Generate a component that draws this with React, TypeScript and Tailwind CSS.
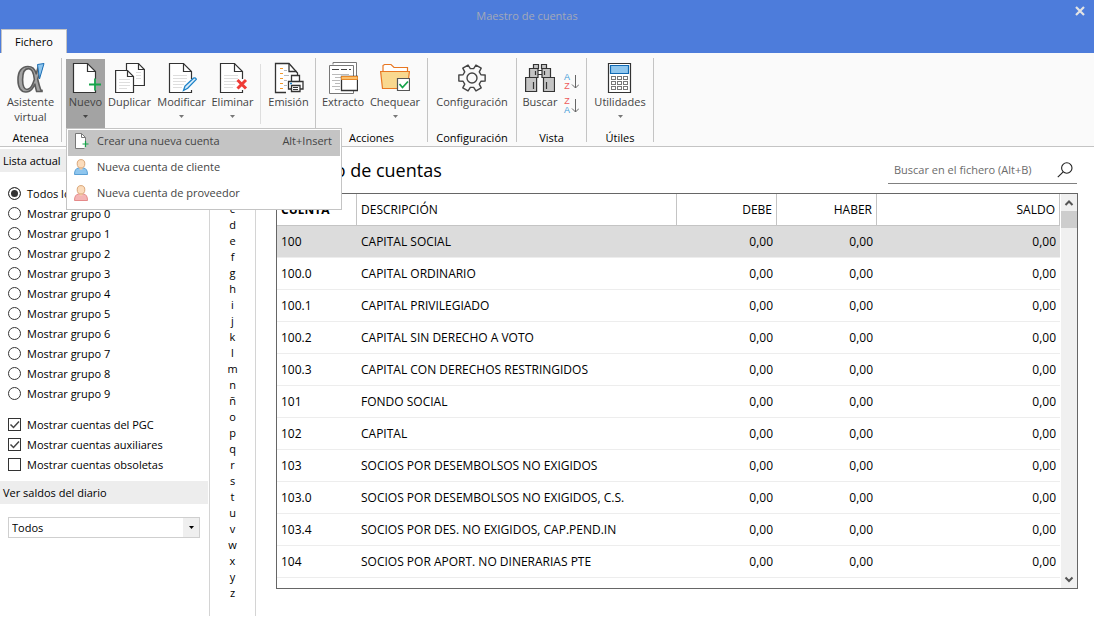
import { useState, type ReactNode } from "react";
import clsx from "clsx";

const accounts = [
  { code: "100", name: "CAPITAL SOCIAL" },
  { code: "100.0", name: "CAPITAL ORDINARIO" },
  { code: "100.1", name: "CAPITAL PRIVILEGIADO" },
  { code: "100.2", name: "CAPITAL SIN DERECHO A VOTO" },
  { code: "100.3", name: "CAPITAL CON DERECHOS RESTRINGIDOS" },
  { code: "101", name: "FONDO SOCIAL" },
  { code: "102", name: "CAPITAL" },
  { code: "103", name: "SOCIOS POR DESEMBOLSOS NO EXIGIDOS" },
  { code: "103.0", name: "SOCIOS POR DESEMBOLSOS NO EXIGIDOS, C.S." },
  { code: "103.4", name: "SOCIOS POR DES. NO EXIGIDOS, CAP.PEND.IN" },
  { code: "104", name: "SOCIOS POR APORT. NO DINERARIAS PTE" },
];

const groups = ["Todos los grupos", ...Array.from({ length: 10 }, (_, i) => `Mostrar grupo ${i}`)];
const letters = "abcdefghijklmnñopqrstuvwxyz".split("");

export default function App() {
  const [group, setGroup] = useState(groups[0]);
  const [letter, setLetter] = useState("");
  const [selected, setSelected] = useState("100");
  const [menuOpen, setMenuOpen] = useState(true);

  return (
    <div className="flex min-h-screen flex-col bg-white font-['Open_Sans',sans-serif] text-[11px] leading-4 text-black">
      <header className="flex h-[53px] flex-col justify-between bg-[#4d7cdb]">
        <div className="grid grid-cols-[1fr_auto_1fr] items-start">
          <h1 className="col-start-2 pt-2 pr-10 leading-4 text-[#a3a9b8]">Maestro de cuentas</h1>
          <button type="button" aria-label="Cerrar" className="mt-px mr-1 justify-self-end p-1">
            <svg className="size-3" viewBox="0 0 12 12" stroke="#e4e4e4" strokeWidth="2.2">
              <path d="M2 2l8 8M10 2l-8 8" />
            </svg>
          </button>
        </div>
        <nav className="flex px-px">
          <button type="button" className="h-6 w-[66px] border border-b-0 border-[#c4c4c4] bg-[#fafafa]">Fichero</button>
        </nav>
      </header>

      <div className="flex h-[94px] border-b border-[#c4c4c4] bg-[#fafafa] pt-[5px]">
        <RibbonGroup label="Atenea" width="w-[62px]">
          <RibbonButton label="Asistente virtual" width="w-[61px]" icon={<AlphaIcon />} />
        </RibbonGroup>
        <RibbonGroup label="" width="w-[254px]">
          <div className="relative ml-1">
            <RibbonButton label="Nuevo" width="w-[39px]" icon={<DocIcon kind="new" />} arrow active={menuOpen} onClick={() => setMenuOpen(!menuOpen)} />
            {menuOpen && (
              <div role="menu" className="absolute top-[70px] left-0 z-10 w-[276px] border border-[#c4c4c4] bg-white p-px text-[#444]">
                <MenuItem label="Crear una nueva cuenta" hint="Alt+Insert" active icon={<SmallDocIcon />} />
                <MenuItem label="Nueva cuenta de cliente" icon={<PersonIcon fill="#8fc6ee" stroke="#5a9fd4" />} />
                <MenuItem label="Nueva cuenta de proveedor" icon={<PersonIcon fill="#f4b4b4" stroke="#e58a8a" />} />
              </div>
            )}
          </div>
          <RibbonButton label="Duplicar" width="w-[49px]" icon={<DuplicateIcon />} />
          <RibbonButton label="Modificar" width="w-[55px]" icon={<DocIcon kind="edit" />} arrow />
          <RibbonButton label="Eliminar" width="w-[47px]" icon={<DocIcon kind="delete" />} arrow />
          <div className="mx-1 mt-1.5 h-[60px] w-px shrink-0 bg-[#dedede]" />
          <RibbonButton label="Emisión" width="w-[47px]" icon={<PrintIcon />} />
        </RibbonGroup>
        <RibbonGroup label="Acciones" width="w-[112px]">
          <RibbonButton label="Extracto" width="w-[54px]" icon={<StatementIcon />} />
          <RibbonButton label="Chequear" width="w-[50px]" icon={<FolderIcon />} arrow />
        </RibbonGroup>
        <RibbonGroup label="Configuración" width="w-[89px]">
          <RibbonButton label="Configuración" width="w-[88px]" icon={<GearIcon />} />
        </RibbonGroup>
        <RibbonGroup label="Vista" width="w-[70px]">
          <RibbonButton label="Buscar" width="w-[46px]" icon={<BinocularsIcon />} />
          <div className="flex flex-col gap-1.5 pt-[15px]">
            <SortButton label="Orden ascendente" first="A" second="Z" />
            <SortButton label="Orden descendente" first="Z" second="A" />
          </div>
        </RibbonGroup>
        <RibbonGroup label="Útiles" width="w-[67px]">
          <RibbonButton label="Utilidades" width="w-[66px]" icon={<CalculatorIcon />} arrow />
        </RibbonGroup>
      </div>

      <div className="flex flex-1 pb-px">
        <aside className="w-[210px] shrink-0 border-r border-[#d4d4d4] pt-0.5">
          <h2 className="mr-px h-[23px] bg-[#ededed] px-[3px] leading-[23px]">Lista actual</h2>
          <fieldset className="mt-3 flex flex-col px-2">
            {groups.map((item) => (
              <label key={item} className="flex h-5 items-center gap-1.5">
                <input
                  type="radio"
                  name="group"
                  checked={group === item}
                  onChange={() => setGroup(item)}
                  className="mb-px size-[13px] appearance-none rounded-full border border-[#333] bg-white checked:bg-[#333] checked:shadow-[inset_0_0_0_2px_white]"
                />
                {item}
              </label>
            ))}
          </fieldset>
          <div className="mt-[11px] flex flex-col px-2">
            <CheckRow label="Mostrar cuentas del PGC" checked />
            <CheckRow label="Mostrar cuentas auxiliares" checked />
            <CheckRow label="Mostrar cuentas obsoletas" />
          </div>
          <h2 className="mt-1.5 mr-px h-[23px] bg-[#ededed] px-[3px] leading-[23px]">
            <label htmlFor="balances">Ver saldos del diario</label>
          </h2>
          <div className="relative mx-2 mt-[13px] w-48">
            <select id="balances" className="h-[21px] w-full appearance-none border border-[#cfcfcf] bg-white px-[3px] leading-4">
              <option>Todos</option>
            </select>
            <div className="pointer-events-none absolute inset-y-px right-px flex w-4 items-center justify-center bg-[#efefef]">
              <Caret className="text-black" />
            </div>
          </div>
        </aside>

        <nav aria-label="Índice" className="flex w-[46px] shrink-0 flex-col items-center border-r border-[#d4d4d4] pt-[22px]">
          {letters.map((item) => (
            <button key={item} type="button" onClick={() => setLetter(item)} className={clsx("h-4 w-5", letter === item && "font-bold")}>
              {item}
            </button>
          ))}
        </nav>

        <main className="min-w-0 flex-1 pr-4 pl-5">
          <div className="flex h-[46px] items-start justify-between">
            <h2 className="pt-[9px] text-lg leading-7">Maestro de cuentas</h2>
            <label className="mt-[9px] mr-px flex h-7 w-[189px] items-center border-b border-[#808080] pr-1 pl-1.5">
              <input type="search" aria-label="Buscar en el fichero" placeholder="Buscar en el fichero (Alt+B)" className="min-w-0 flex-1 outline-none placeholder:text-[#6b6b6b]" />
              <svg className="size-4" viewBox="0 0 16 16" fill="none" stroke="#222" strokeWidth="1.1">
                <circle cx="9.8" cy="6" r="5.2" />
                <path d="M6.2 9.8L.8 15.2" />
              </svg>
            </label>
          </div>

          <div className="flex border border-[#666]">
            <div className="min-w-0 flex-1 pb-2.5">
              <table className="w-full table-fixed border-separate border-spacing-0 text-xs">
                <thead>
                  <tr className="h-8 *:border-r *:border-b *:border-[#c4c4c4]">
                    <th className="w-20 px-1 text-left font-bold">CUENTA</th>
                    <th className="w-80 px-1 text-left font-normal">DESCRIPCIÓN</th>
                    <th className="w-[100px] px-1 text-right font-normal">DEBE</th>
                    <th className="w-[100px] px-1 text-right font-normal">HABER</th>
                    <th className="px-1 text-right font-normal">SALDO</th>
                  </tr>
                </thead>
                <tbody>
                  {accounts.map((account) => (
                    <tr key={account.code} onClick={() => setSelected(account.code)} className={clsx("h-8 *:border-b *:border-[#ededed]", selected === account.code && "bg-[#dcdcdc]")}>
                      <td className="px-1">{account.code}</td>
                      <td className="truncate px-1">{account.name}</td>
                      <td className="px-1 text-right">0,00</td>
                      <td className="px-1 text-right">0,00</td>
                      <td className="px-1 text-right">0,00</td>
                    </tr>
                  ))}
                </tbody>
              </table>
            </div>
            <div className="ml-px flex w-4 flex-col items-center bg-[#f0f0f0]">
              <svg className="h-[17px] w-4" viewBox="0 0 16 17" fill="none" stroke="#555" strokeWidth="2">
                <path d="M4.5 11L8 7.5l3.5 3.5" />
              </svg>
              <div className="h-[17px] w-full bg-[#cdcdcd]" />
              <svg className="mt-auto h-[17px] w-4" viewBox="0 0 16 17" fill="none" stroke="#555" strokeWidth="2">
                <path d="M4.5 6.5L8 10l3.5-3.5" />
              </svg>
            </div>
          </div>
        </main>
      </div>
    </div>
  );
}

function RibbonGroup({ label, width, children }: { label: string; width: string; children: ReactNode }) {
  return (
    <section className={clsx("flex h-[84px] shrink-0 flex-col border-r border-[#c4c4c4]", width)}>
      <div className="flex h-[74px] shrink-0 items-start">{children}</div>
      <p className="text-center leading-3">{label}</p>
    </section>
  );
}

function RibbonButton({ label, width, icon, arrow, active, onClick }: { label: string; width: string; icon: ReactNode; arrow?: boolean; active?: boolean; onClick?: () => void }) {
  return (
    <button type="button" onClick={onClick} className={clsx("mt-px flex h-[69px] shrink-0 flex-col items-center pt-[3px] text-[#444]", width, active && "bg-[#a3a3a3]")}>
      {icon}
      <span className="leading-[15px]">{label}</span>
      {arrow && <Caret className={clsx("mt-1.5", active ? "text-[#444]" : "text-[#777]")} />}
    </button>
  );
}

function SortButton({ label, first, second }: { label: string; first: string; second: string }) {
  return (
    <button type="button" aria-label={label} className="flex h-[18px] w-4 items-center">
      <span className="flex w-2 flex-col items-center font-['Liberation_Sans',sans-serif] text-[9px] leading-[9px]">
        <span className={first === "A" ? "text-[#3f9bd8]" : "text-[#ee5a5a]"}>{first}</span>
        <span className={second === "A" ? "text-[#3f9bd8]" : "text-[#ee5a5a]"}>{second}</span>
      </span>
      <svg className="h-4 w-2 shrink-0" viewBox="0 0 8 16" fill="none" stroke="#666">
        <path d="M4.5 1v13M1 10.5L4.5 14L8 10.5" />
      </svg>
    </button>
  );
}

function MenuItem({ label, hint, icon, active }: { label: string; hint?: string; icon: ReactNode; active?: boolean }) {
  return (
    <button type="button" role="menuitem" className={clsx("flex h-[26px] w-full items-center pr-2 pb-1 pl-[5px]", active && "bg-[#c4c4c4]")}>
      {icon}
      <span className="ml-2">{label}</span>
      <span className="ml-auto">{hint}</span>
    </button>
  );
}

function CheckRow({ label, checked }: { label: string; checked?: boolean }) {
  return (
    <label className="flex h-5 items-center gap-1.5">
      <span className="mb-px grid size-[13px]">
        <input type="checkbox" defaultChecked={checked} className="peer col-start-1 row-start-1 size-[13px] appearance-none border border-[#333] bg-white" />
        <svg className="pointer-events-none invisible col-start-1 row-start-1 peer-checked:visible" viewBox="0 0 13 13" fill="none" stroke="#444" strokeWidth="1.5">
          <path d="M2.5 6.5l3 3l5.5-6" />
        </svg>
      </span>
      {label}
    </label>
  );
}

function Caret({ className }: { className?: string }) {
  return (
    <svg className={clsx("h-[3px] w-[5px] shrink-0", className)} viewBox="0 0 5 3" fill="currentColor">
      <path d="M0 0h5L2.5 3z" />
    </svg>
  );
}

function AlphaIcon() {
  return (
    <svg className="h-8 w-[30px] overflow-visible" viewBox="0 0 30 32">
      <text x="0" y="29" fontFamily="Liberation Serif" fontSize="52" fill="#a3a3a3" stroke="#5c5c5c" strokeWidth="1.6">α</text>
      <path d="M21.5 2.5L28 1.5L23.5 17z" fill="#8fc6ee" stroke="#1b6fb5" />
    </svg>
  );
}

function DocIcon({ kind }: { kind: "new" | "edit" | "delete" }) {
  return (
    <svg className="h-8 w-[30px]" viewBox="0 0 30 32" fill="none">
      <path d="M24.5 17V9.5L16.5 1.5H2.5V30.5H24.5V28" fill="#fff" stroke="#333" strokeWidth="1.2" />
      <path d="M16.5 1.5V9.5H24.5" stroke="#333" strokeWidth="1.2" />
      {kind !== "new" && <path d="M6 13.5h14M6 16.5h14M6 19.5h13M6 22.5h11M6 25.5h9" stroke="#dedede" />}
      {kind === "new" && <path d="M24 16.5v12M18 22.5h12" stroke="#16a34a" strokeWidth="1.8" />}
      {kind === "edit" && <path d="M16.5 28.5l1.5-4.5L26.5 16.2q2.5-.8 2.8 1.2l-8.6 8.8z" fill="#d6ebfa" stroke="#1d82c8" strokeWidth="1.3" />}
      {kind === "delete" && <path d="M19.5 18l8.5 8.5M28 18l-8.5 8.5" stroke="#ef3b36" strokeWidth="3" />}
    </svg>
  );
}

function DuplicateIcon() {
  return (
    <svg className="h-8 w-[30px]" viewBox="0 0 30 32" fill="none" stroke="#333" strokeWidth="1.2">
      <path d="M11.5 8V1.5H23.5L29.4 7.5V23.5H19" fill="#fff" />
      <path d="M23.5 1.5V7.5H29.5" />
      <path d="M.6 8.5H12.5L18.5 14.5V30.5H.6z" fill="#fff" />
      <path d="M12.5 8.5V14.5H18.5" />
      <path d="M4 17.5h11M4 20.5h11M4 23.5h11M4 26.5h8M21 10.5h5M21 13.5h5M21 16.5h5" stroke="#dedede" />
    </svg>
  );
}

function PrintIcon() {
  return (
    <svg className="h-8 w-[30px]" viewBox="0 0 30 32" fill="none" stroke="#333" strokeWidth="1.3">
      <path d="M12 30.5H1.5V1.5H15L23.5 11V13" fill="#fff" />
      <path d="M15 1.5V9.5H22.5" />
      <path d="M6 6.5h3M6 11.5h3M6 16.5h3M6 21.5h3M6 26.5h3" stroke="#f29a2e" strokeWidth="1.2" />
      <path d="M10 8.5h3M10 13.5h5M10 18.5h3M10 23.5h3" stroke="#bbb" strokeWidth="1" />
      <path d="M17.5 19V13.5h8V19" fill="#fff" />
      <path d="M14.5 19.5h14.5v7.5H14.5z" fill="#fff" />
      <path d="M17.5 23.5h8.5v6h-8.5z" fill="#fff" />
      <path d="M19 25.5h5M19 27.5h5" strokeWidth="1" />
      <path d="M16 21.5h2" stroke="#1d82c8" />
    </svg>
  );
}

function StatementIcon() {
  return (
    <svg className="h-8 w-[30px]" viewBox="0 0 30 32" fill="none" stroke="#777">
      <path d="M5 2.5V.5H28.5V27" fill="#fff" />
      <path d="M1.5 3.5H25.5V31.5H1.5z" fill="#fff" />
      <path d="M4 7.5h7M13 7.5h6M21 7.5h2" stroke="#444" />
      <path d="M4 12.5h17M7 15.5h12M4 18.5h8M7 21.5h5M4 24.5h8M7 27.5h5" stroke="#bbb" />
      <path d="M13.5 14.5h16v14h-16z" fill="#fff" stroke="#333" strokeWidth="1.3" />
      <path d="M13.5 14.5h16v3h-16z" fill="#fbc06d" stroke="#e88b2c" />
    </svg>
  );
}

function FolderIcon() {
  return (
    <svg className="h-8 w-[30px]" viewBox="0 0 30 32" fill="none" stroke="#e87722" strokeWidth="1.2">
      <path d="M3 10V3.5L4.5 2.5H11L14 5.5H27.5V10" fill="#fff" />
      <path d="M.6 9.5H29.4L27.5 26.5H2.5z" fill="#f9d88f" />
      <path d="M17.5 16.5h12v12h-12z" fill="#fff" stroke="#555" />
      <path d="M19.5 22l3 3.5L28 19.5" stroke="#16a34a" strokeWidth="1.8" />
    </svg>
  );
}

function GearIcon() {
  // six teeth, each one drawn by four corners: base, tip, tip, base
  const points = [0, 60, 120, 180, 240, 300].flatMap((tooth) =>
    [[-20, 9.5], [-13, 13.5], [13, 13.5], [20, 9.5]].map(([offset, radius]) => {
      const angle = ((tooth + offset) * Math.PI) / 180;
      return `${(15 + radius * Math.cos(angle)).toFixed(2)},${(16 + radius * Math.sin(angle)).toFixed(2)}`;
    }),
  );

  return (
    <svg className="h-8 w-[30px]" viewBox="0 0 30 32" fill="none" stroke="#444" strokeWidth="1.4" strokeLinejoin="round">
      <polygon points={points.join(" ")} />
      <circle cx="15" cy="16" r="5" />
    </svg>
  );
}

function BinocularsIcon() {
  return (
    <svg className="h-8 w-[30px]" viewBox="0 0 30 32" fill="#c4c4c4" stroke="#333" strokeWidth="1.2">
      <path d="M8.5 2.5h5v4h-5zM16.5 2.5h5v4h-5z" />
      <path d="M12 8.5h6v4h-6z" fill="#fff" />
      <path d="M4.5 6.5h8.5v9H4.5zM17 6.5h8.5v9H17z" />
      <path d="M.6 15.5h11v14H.6zM18.5 15.5h11v14h-11z" />
      <path d="M10.5 9v4M19.5 9v4M8.5 20v7M21.5 20v7" />
    </svg>
  );
}

function CalculatorIcon() {
  return (
    <svg className="h-8 w-[30px]" viewBox="0 0 30 32" fill="#fff" stroke="#333" strokeWidth="1.2">
      <path d="M3.5 1.5h22v29h-22z" />
      <path d="M5.5 3.5h18v8h-18z" fill="#8fc6ee" stroke="#0f69b4" />
      {[14.5, 19.5, 24.5].map((y) => [6.5, 12.5, 18.5].map((x) => <rect key={`${x}-${y}`} x={x} y={y} width="4" height="3" stroke="#777" strokeWidth="1" />))}
    </svg>
  );
}

function SmallDocIcon() {
  return (
    <svg className="size-4" viewBox="0 0 16 16" fill="none">
      <path d="M12.5 8V4.5L8.5.5H2.5v15h9" fill="#fff" stroke="#777" />
      <path d="M8.5.5v4h4" stroke="#777" />
      <path d="M12.5 8v6M9.5 11h6" stroke="#16a34a" strokeWidth="1.2" />
    </svg>
  );
}

function PersonIcon({ fill, stroke }: { fill: string; stroke: string }) {
  return (
    <svg className="size-4" viewBox="0 0 16 16">
      <path d="M1.5 15.5q0-6 4-6.5h5q4 .5 4 6.5z" fill={fill} stroke={stroke} />
      <path d="M6.5 8h3v2.5h-3z" fill="#f8d3ae" />
      <ellipse cx="8" cy="4.8" rx="3.8" ry="4.2" fill="#fbdcbc" stroke="#d9a679" />
    </svg>
  );
}
